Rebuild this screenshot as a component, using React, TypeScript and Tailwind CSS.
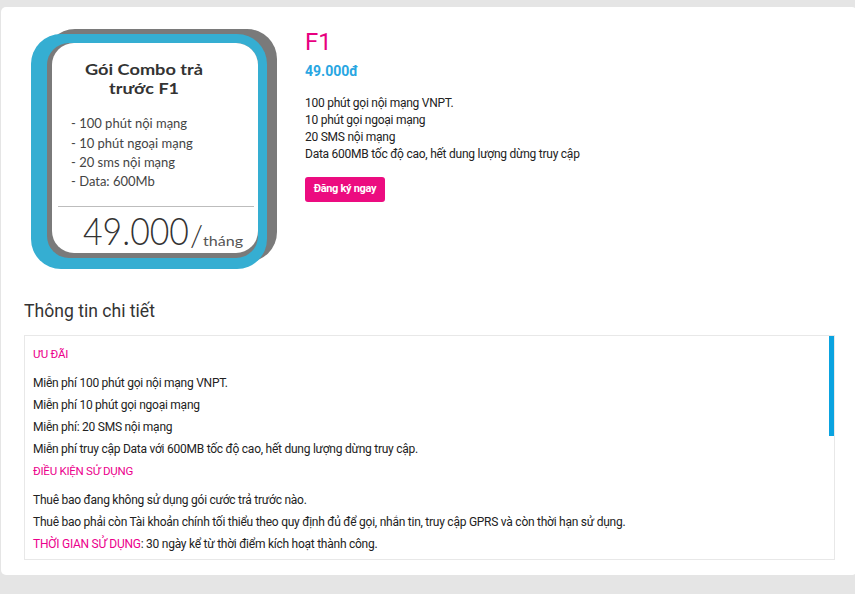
import React from "react";

function ComboImage() {
  const f = "Lato, 'Noto Sans', sans-serif";
  return (
    <svg width="250" height="245" viewBox="0 0 250 245" className="block">
      <rect x="15" y="2" width="232" height="233" rx="30" fill="#7a7a7a" />
      <rect x="1" y="7" width="236" height="235" rx="30" fill="#35aed2" />
      <rect x="17" y="16" width="211" height="215" rx="22" fill="#7a7a7a" />
      <rect x="22" y="16" width="206" height="210" rx="22" fill="#ffffff" />
      <text x="55" y="48" textLength="118" lengthAdjust="spacingAndGlyphs" fontFamily={f} fontWeight="700" fontSize="16" fill="#333">Gói Combo trả</text>
      <text x="79" y="67" textLength="70" lengthAdjust="spacingAndGlyphs" fontFamily={f} fontWeight="700" fontSize="16" fill="#333">trước F1</text>
      <g fontFamily={f} fontSize="13" fill="#444">
        <text x="41" y="101">- 100 phút nội mạng</text>
        <text x="41" y="121">- 10 phút ngoại mạng</text>
        <text x="41" y="140">- 20 sms nội mạng</text>
        <text x="41" y="159">- Data: 600Mb</text>
      </g>
      <line x1="28" y1="179.5" x2="224" y2="179.5" stroke="#bdbdbd" strokeWidth="1" />
      <text x="53" y="218" textLength="106" lengthAdjust="spacingAndGlyphs" fontFamily={f} fontWeight="300" fontSize="37" fill="#333">49.000</text>
      <text x="160" y="219" fontFamily={f} fontWeight="300" fontSize="30" fill="#333">/</text>
      <text x="173" y="219" textLength="40" lengthAdjust="spacingAndGlyphs" fontFamily={f} fontSize="13" fill="#555">tháng</text>
    </svg>
  );
}

export default function App() {
  return (
    <div className="w-[855px] h-[594px] bg-[#e5e5e5] pt-[7px] pl-[1px] overflow-hidden" style={{ fontFamily: "Roboto, 'Liberation Sans', sans-serif" }}>
      <div className="bg-white rounded-[5px] h-[568px] w-[856px] pt-[20px] pl-[29px] pr-[20px]">
        <div className="flex">
          <ComboImage />
          <div className="ml-[25px]">
            <div className="text-[24px] leading-[30px] text-[#e8007f]">F1</div>
            <div className="text-[14px] leading-[20px] font-bold text-[#29a6e2] mt-[4px]">49.000đ</div>
            <div className="mt-[14px] text-[12px] leading-[17px] text-[#222] tracking-[-0.25px]">
              <p>100 phút gọi nội mạng VNPT.</p>
              <p>10 phút gọi ngoại mạng</p>
              <p>20 SMS nội mạng</p>
              <p>Data 600MB tốc độ cao, hết dung lượng dừng truy cập</p>
            </div>
            <button className="mt-[14px] h-[25px] w-[80px] rounded-[3px] bg-[#ec0c80] text-white text-[11px] font-bold tracking-[-0.3px]">Đăng ký ngay</button>
          </div>
        </div>
        <div className="-ml-[6px] mt-[27px]">
          <h2 className="text-[17.6px] leading-[24px] text-[#333]">Thông tin chi tiết</h2>
          <div className="relative mt-[12px] w-[811px] h-[225px] border border-[#e8e8e8] pl-[8px] pt-[7px] text-[12px] leading-[22px] text-[#222] tracking-[-0.25px]">
            <div className="absolute right-[0px] top-[0px] w-[5px] h-[100px] bg-[#0aa3e0]" />
            <h4 className="text-[11.5px] text-[#ec008c]">ƯU ĐÃI</h4>
            <div className="mt-[7px]">
              <p>Miễn phí 100 phút gọi nội mạng VNPT.</p>
              <p>Miễn phí 10 phút gọi ngoại mạng</p>
              <p>Miễn phí: 20 SMS nội mạng</p>
              <p>Miễn phí truy cập Data với 600MB tốc độ cao, hết dung lượng dừng truy cập.</p>
            </div>
            <h4 className="text-[11.5px] text-[#ec008c]">ĐIỀU KIỆN SỬ DỤNG</h4>
            <div className="mt-[7px]">
              <p>Thuê bao đang không sử dụng gói cước trả trước nào.</p>
              <p>Thuê bao phải còn Tài khoản chính tối thiểu theo quy định đủ để gọi, nhắn tin, truy cập GPRS và còn thời hạn sử dụng.</p>
              <p><span className="text-[#ec008c]">THỜI GIAN SỬ DỤNG</span>: 30 ngày kể từ thời điểm kích hoạt thành công.</p>
            </div>
          </div>
        </div>
      </div>
    </div>
  );
}
